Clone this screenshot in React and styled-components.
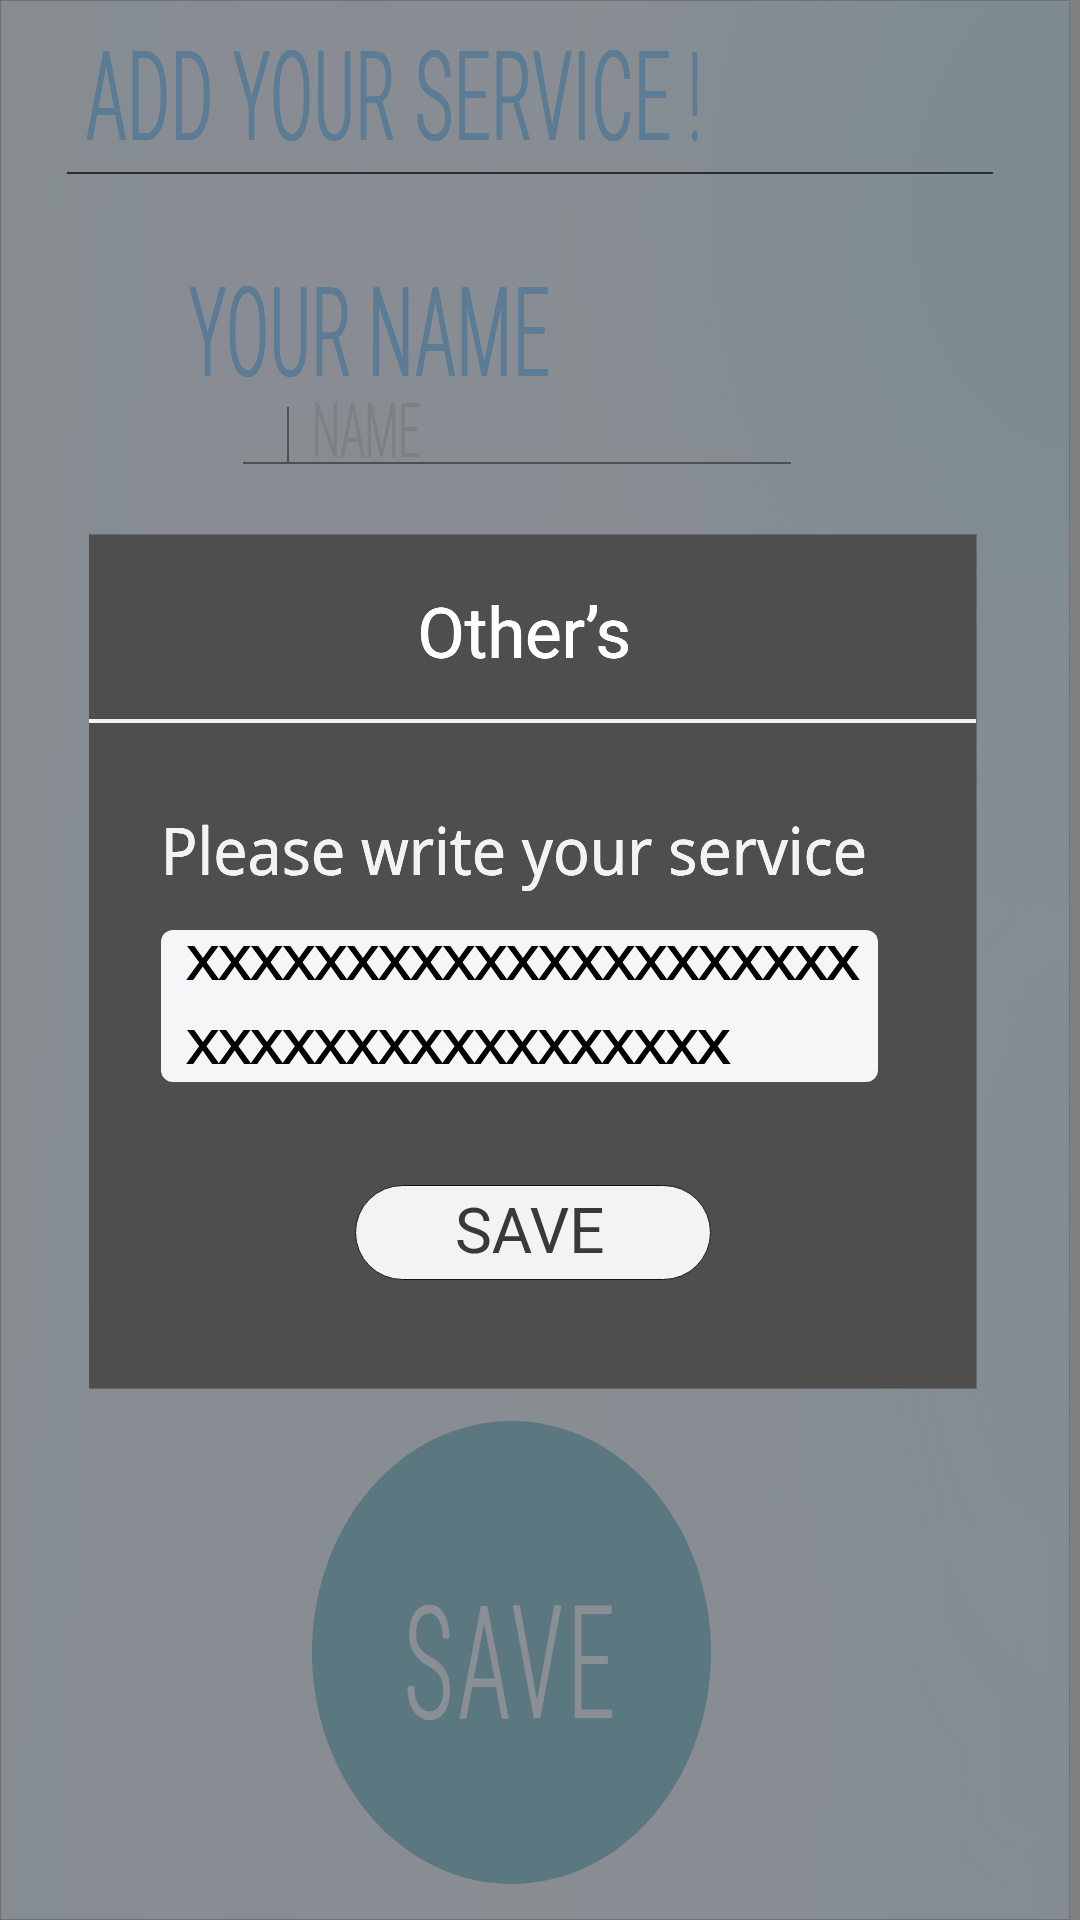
import React, { useLayoutEffect, useState } from "react";
import styled, { createGlobalStyle } from "styled-components";

const GlobalStyle = createGlobalStyle`
  * { box-sizing: border-box; }
  html, body { margin: 0; padding: 0; background: #808080; }
`;

const Page = styled.div`
  position: relative;
  width: 1080px;
  height: 1920px;
  padding-right: 10px;
  background: #808080;
  overflow: hidden;
`;

const Screen = styled.main`
  display: flex;
  flex-direction: column;
  width: 1070px;
  height: 1920px;
  border: 1px solid #6e7274;
  background:
    radial-gradient(ellipse 520px 700px at 1090px 210px, rgba(125, 139, 147, 1) 20%, rgba(125, 139, 147, 0) 100%),
    radial-gradient(ellipse 330px 800px at 1070px 1250px, rgba(130, 139, 148, 0.8), rgba(130, 139, 148, 0) 100%),
    linear-gradient(93deg, #868c8f 0%, #868d92 12%, #898c93 24%, #878d92 38%, #888d92 52%, #888d93 66%, #868d93 82%, #848c93 100%);
`;

const Header = styled.header`
  margin: 0 76px 0 66px;
  padding: 51px 0 32px 19px;
  border-bottom: 2px solid #2b2b2d;
`;

const Words = styled.div`
  display: flex;
  gap: ${(p) => p.$gap}px;
`;

const Field = styled.section`
  padding: 114px 0 0 188px;
`;

const Input = styled.div`
  display: flex;
  align-items: flex-start;
  gap: 26px;
  width: 548px;
  height: 60px;
  margin: 28px 0 0 54px;
  padding-left: 44px;
  border-bottom: 2px solid #505051;
`;

const Caret = styled.span`
  width: 2px;
  height: 55px;
  margin-top: 3px;
  background: #505051;
`;

const RoundButton = styled.button`
  display: flex;
  justify-content: flex-start;
  align-items: flex-start;
  width: 399px;
  height: 463px;
  margin: auto 0 35px 311px;
  padding: 185px 0 0 95px;
  border: 0;
  border-radius: 50%;
  background: #5b777f;
`;

const Dialog = styled.section`
  position: absolute;
  top: 534px;
  left: 89px;
  display: flex;
  flex-direction: column;
  width: 888px;
  height: 855px;
  background: #4e4e4e;
  border: solid #66696b;
  border-width: 1px 1px 1px 0;
`;

const DialogHeader = styled.header`
  height: 188px;
  padding: 74px 0 0 332px;
  border-bottom: 4px solid #f3f3f3;
`;

const DialogBody = styled.div`
  display: flex;
  flex-direction: column;
  padding: 105px 0 0 72px;
`;

const Label = styled.div`
  padding-left: 5px;
`;

const TextArea = styled.div`
  display: flex;
  flex-direction: column;
  gap: 50px;
  width: 717px;
  height: 152px;
  margin-top: 55px;
  padding: 16px 0 0 25px;
  border-radius: 12px;
  background: #f5f6f8;
`;

const PillButton = styled.button`
  display: flex;
  align-items: flex-start;
  width: 356px;
  height: 95px;
  margin: 103px 0 0 194px;
  padding: 23px 0 0 101px;
  border: 1px solid #141414;
  border-radius: 48px;
  background: #f3f3f3;
`;

const CapBox = styled.span`
  display: block;
  flex: none;
  width: ${(p) => p.$width}px;
  height: ${(p) => p.$cap}px;
`;

const Glyphs = styled.span`
  display: inline-block;
  font-family: ${(p) => p.$family}, sans-serif;
  font-size: ${(p) => p.$size}px;
  font-weight: ${(p) => p.$weight};
  line-height: ${(p) => p.$cap}px;
  letter-spacing: ${(p) => p.$spacing}px;
  color: ${(p) => p.$color};
  text-shadow: ${(p) => (p.$stem ? `${p.$stem}px 0 currentColor, -${p.$stem}px 0 currentColor` : "none")};
  white-space: pre;
  transform-origin: 0 0;
`;

// Condenses or widens a run of text so its ink fills `width`, with capitals `cap` px tall.
// `stem` thickens the upright strokes that condensing makes thin.
function FitText({ children, width, cap, color, family = "Roboto", weight = 400, spacing = 0, stem = 0 }) {
  const [transform, setTransform] = useState("none");
  const size = cap / (family === "Roboto" ? 0.711 : 0.714);

  useLayoutEffect(() => {
    const ctx = document.createElement("canvas").getContext("2d");
    ctx.font = `${weight} ${size}px "${family}"`;
    ctx.letterSpacing = `${spacing}px`;
    const m = ctx.measureText(children);
    const left = m.actualBoundingBoxLeft + stem;
    const scale = width / (m.actualBoundingBoxRight + stem + left);
    const dy = cap / 2 - (m.fontBoundingBoxAscent - m.fontBoundingBoxDescent) / 2;
    setTransform(`translate(${left * scale}px, ${dy}px) scaleX(${scale})`);
  }, [children, width, cap, family, weight, spacing, size, stem]);

  return (
    <CapBox $width={width} $cap={cap}>
      <Glyphs
        $family={family}
        $size={size}
        $weight={weight}
        $cap={cap}
        $spacing={spacing}
        $stem={stem}
        $color={color}
        style={{ transform }}
      >
        {children}
      </Glyphs>
    </CapBox>
  );
}

const heading = { cap: 88, weight: 300, color: "#5b7c94", stem: 2, spacing: 4 };

export default function App() {
  return (
    <Page>
      <GlobalStyle />
      <Screen>
        <Header>
          <Words $gap={23.3}>
            <FitText {...heading} width={124}>ADD</FitText>
            <FitText {...heading} width={160.5}>YOUR</FitText>
            <FitText {...heading} width={252}>SERVICE</FitText>
            <FitText {...heading} width={6}>!</FitText>
          </Words>
        </Header>
        <Field>
          <Words $gap={23.5}>
            <FitText {...heading} width={160.5}>YOUR</FitText>
            <FitText {...heading} width={175}>NAME</FitText>
          </Words>
          <Input>
            <Caret />
            <FitText width={105} cap={53.5} weight={300} stem={0.7} color="#7e8083">NAME</FitText>
          </Input>
        </Field>
        <RoundButton>
          <FitText width={205} cap={112} weight={300} spacing={14} stem={2} color="#8a8e95">SAVE</FitText>
        </RoundButton>
      </Screen>
      <Dialog>
        <DialogHeader>
          <FitText width={207.5} cap={49.5} stem={0.4} color="#ffffff">Other’s</FitText>
        </DialogHeader>
        <DialogBody>
          <Label>
            <FitText width={698.5} cap={47} family="Noto Sans" stem={0.3} color="#f3f3f3">Please write your service</FitText>
          </Label>
          <TextArea>
            <FitText width={674} cap={34} family="Noto Sans" stem={0.8} color="#000000">XXXXXXXXXXXXXXXXXXXXX</FitText>
            <FitText width={545} cap={34} family="Noto Sans" stem={0.8} color="#000000">XXXXXXXXXXXXXXXXX</FitText>
          </TextArea>
          <PillButton>
            <FitText width={146} cap={44.3} color="#39393b">SAVE</FitText>
          </PillButton>
        </DialogBody>
      </Dialog>
    </Page>
  );
}
